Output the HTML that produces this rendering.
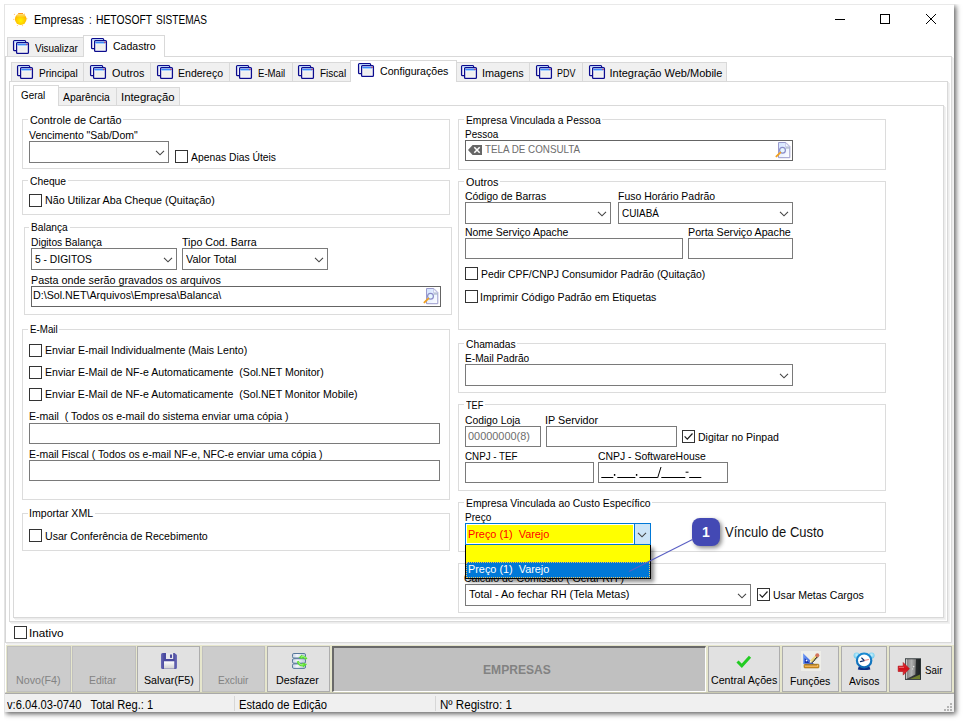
<!DOCTYPE html>
<html lang="pt-BR"><head><meta charset="utf-8"><title>Empresas : HETOSOFT SISTEMAS</title><style>
html,body{margin:0;padding:0;background:#fff}
#root{position:relative;width:963px;height:721px;overflow:hidden;background:#fff;font-family:"Liberation Sans",sans-serif}
#root>*{position:absolute;box-sizing:border-box}
#win{left:4px;top:4px;width:950px;height:708px;background:#fff;border:1px solid #e4e4e4;border-top-color:#e9e9e9;border-right:none;border-bottom:none;box-shadow:2px 2px 5px 0 rgba(0,0,0,.62);clip-path:inset(0 -14px -14px 0)}
.t{white-space:pre;line-height:24px;height:24px;transform-origin:0 0;font-family:"Liberation Sans",sans-serif}
svg{overflow:visible}
</style></head><body><div id="root">
<div id="win"></div>
<svg style="left:12px;top:11px" width="17" height="17" viewBox="12 11 17 17"><defs><radialGradient id="sg" cx="50%" cy="64%" r="58%"><stop offset="0" stop-color="#fff600"/><stop offset=".5" stop-color="#ffd200"/><stop offset="1" stop-color="#ffb000"/></radialGradient><linearGradient id="sh" x1="0" y1="0" x2="0" y2="1"><stop offset="0" stop-color="#fff0a0" stop-opacity=".9"/><stop offset="1" stop-color="#fff0a0" stop-opacity="0"/></linearGradient></defs><g fill="#ff9a1e" opacity=".55"><circle cx="14.500" cy="14.400" r=".6"/><circle cx="13.800" cy="19.400" r=".6"/><circle cx="17.400" cy="25.500" r=".6"/><circle cx="22.500" cy="25.600" r=".6"/><circle cx="26.800" cy="18.700" r=".6"/><circle cx="24.400" cy="14.300" r=".7"/></g><circle cx="20.700" cy="19.100" r="5.800" fill="url(#sg)"/><path d="M16.400 15.200a5.800 5.800 0 0 1 8.600 0v2.400h-8.600z" fill="url(#sh)"/><path d="M18.200 13.500h4.800" stroke="#ff8c10" stroke-width=".9"/></svg>
<svg style="left:830px;top:9px" width="112" height="20" viewBox="0 0 112 20" fill="none" stroke="#000" stroke-width="1"><path d="M5 10.5h10"/><rect x="50.5" y="5.5" width="9" height="9"/><path d="M96 5l10 10M106 5l-10 10"/></svg>
<div style="left:5px;top:56px;width:947px;height:587px;border:1px solid #d9d9d9;border-left-color:#d6d6d6;background:#fff;box-shadow:1px 1px 0 #ececec,2px 2px 0 #f2f2f2"></div>
<div style="left:7px;top:37px;width:77px;height:19px;border:1px solid #d9d9d9;border-bottom:none;background:#f0f0f0"></div>
<svg style="left:13px;top:40px" width="16" height="14" viewBox="0 0 16 14"><rect x=".6" y=".6" width="12" height="10" rx=".9" fill="#fff" stroke="#0c0c8e" stroke-width="1.3"/><rect x="1.3" y="1.3" width="10.5" height="1.3" fill="#b4d8ff"/><rect x="3.6" y="2.6" width="11.8" height="10.8" rx=".9" fill="#fff" stroke="#0c0c8e" stroke-width="1.3"/><rect x="5.2" y="6.2" width="8.6" height="5.6" fill="#efefef"/><rect x="4.3" y="3.7" width="10.4" height="1.3" fill="#2f7df6"/><rect x="4.3" y="4.9" width="10.4" height="1" fill="#9ccbff"/><rect x="13.3" y="3.8" width="1.3" height="1.3" fill="#e0344a"/></svg>
<div style="left:83px;top:35px;width:82px;height:22px;border:1px solid #d9d9d9;border-bottom:none;background:#fff"></div>
<svg style="left:91px;top:38px" width="16" height="14" viewBox="0 0 16 14"><rect x=".6" y=".6" width="12" height="10" rx=".9" fill="#fff" stroke="#0c0c8e" stroke-width="1.3"/><rect x="1.3" y="1.3" width="10.5" height="1.3" fill="#b4d8ff"/><rect x="3.6" y="2.6" width="11.8" height="10.8" rx=".9" fill="#fff" stroke="#0c0c8e" stroke-width="1.3"/><rect x="5.2" y="6.2" width="8.6" height="5.6" fill="#efefef"/><rect x="4.3" y="3.7" width="10.4" height="1.3" fill="#2f7df6"/><rect x="4.3" y="4.9" width="10.4" height="1" fill="#9ccbff"/><rect x="13.3" y="3.8" width="1.3" height="1.3" fill="#e0344a"/></svg>
<div style="left:9px;top:81px;width:939px;height:541px;border:1px solid #d9d9d9;background:#fff;box-shadow:1px 1px 0 #ececec,2px 2px 0 #f2f2f2"></div>
<div style="left:11px;top:62px;width:73px;height:19px;border:1px solid #d9d9d9;border-bottom:none;background:#f0f0f0"></div>
<svg style="left:17px;top:65px" width="16" height="14" viewBox="0 0 16 14"><rect x=".6" y=".6" width="12" height="10" rx=".9" fill="#fff" stroke="#0c0c8e" stroke-width="1.3"/><rect x="1.3" y="1.3" width="10.5" height="1.3" fill="#b4d8ff"/><rect x="3.6" y="2.6" width="11.8" height="10.8" rx=".9" fill="#fff" stroke="#0c0c8e" stroke-width="1.3"/><rect x="5.2" y="6.2" width="8.6" height="5.6" fill="#efefef"/><rect x="4.3" y="3.7" width="10.4" height="1.3" fill="#2f7df6"/><rect x="4.3" y="4.9" width="10.4" height="1" fill="#9ccbff"/><rect x="13.3" y="3.8" width="1.3" height="1.3" fill="#e0344a"/></svg>
<div style="left:83px;top:62px;width:68px;height:19px;border:1px solid #d9d9d9;border-bottom:none;background:#f0f0f0"></div>
<svg style="left:90px;top:65px" width="16" height="14" viewBox="0 0 16 14"><rect x=".6" y=".6" width="12" height="10" rx=".9" fill="#fff" stroke="#0c0c8e" stroke-width="1.3"/><rect x="1.3" y="1.3" width="10.5" height="1.3" fill="#b4d8ff"/><rect x="3.6" y="2.6" width="11.8" height="10.8" rx=".9" fill="#fff" stroke="#0c0c8e" stroke-width="1.3"/><rect x="5.2" y="6.2" width="8.6" height="5.6" fill="#efefef"/><rect x="4.3" y="3.7" width="10.4" height="1.3" fill="#2f7df6"/><rect x="4.3" y="4.9" width="10.4" height="1" fill="#9ccbff"/><rect x="13.3" y="3.8" width="1.3" height="1.3" fill="#e0344a"/></svg>
<div style="left:150px;top:62px;width:80px;height:19px;border:1px solid #d9d9d9;border-bottom:none;background:#f0f0f0"></div>
<svg style="left:157px;top:65px" width="16" height="14" viewBox="0 0 16 14"><rect x=".6" y=".6" width="12" height="10" rx=".9" fill="#fff" stroke="#0c0c8e" stroke-width="1.3"/><rect x="1.3" y="1.3" width="10.5" height="1.3" fill="#b4d8ff"/><rect x="3.6" y="2.6" width="11.8" height="10.8" rx=".9" fill="#fff" stroke="#0c0c8e" stroke-width="1.3"/><rect x="5.2" y="6.2" width="8.6" height="5.6" fill="#efefef"/><rect x="4.3" y="3.7" width="10.4" height="1.3" fill="#2f7df6"/><rect x="4.3" y="4.9" width="10.4" height="1" fill="#9ccbff"/><rect x="13.3" y="3.8" width="1.3" height="1.3" fill="#e0344a"/></svg>
<div style="left:229px;top:62px;width:64px;height:19px;border:1px solid #d9d9d9;border-bottom:none;background:#f0f0f0"></div>
<svg style="left:236px;top:65px" width="16" height="14" viewBox="0 0 16 14"><rect x=".6" y=".6" width="12" height="10" rx=".9" fill="#fff" stroke="#0c0c8e" stroke-width="1.3"/><rect x="1.3" y="1.3" width="10.5" height="1.3" fill="#b4d8ff"/><rect x="3.6" y="2.6" width="11.8" height="10.8" rx=".9" fill="#fff" stroke="#0c0c8e" stroke-width="1.3"/><rect x="5.2" y="6.2" width="8.6" height="5.6" fill="#efefef"/><rect x="4.3" y="3.7" width="10.4" height="1.3" fill="#2f7df6"/><rect x="4.3" y="4.9" width="10.4" height="1" fill="#9ccbff"/><rect x="13.3" y="3.8" width="1.3" height="1.3" fill="#e0344a"/></svg>
<div style="left:292px;top:62px;width:59px;height:19px;border:1px solid #d9d9d9;border-bottom:none;background:#f0f0f0"></div>
<svg style="left:298px;top:65px" width="16" height="14" viewBox="0 0 16 14"><rect x=".6" y=".6" width="12" height="10" rx=".9" fill="#fff" stroke="#0c0c8e" stroke-width="1.3"/><rect x="1.3" y="1.3" width="10.5" height="1.3" fill="#b4d8ff"/><rect x="3.6" y="2.6" width="11.8" height="10.8" rx=".9" fill="#fff" stroke="#0c0c8e" stroke-width="1.3"/><rect x="5.2" y="6.2" width="8.6" height="5.6" fill="#efefef"/><rect x="4.3" y="3.7" width="10.4" height="1.3" fill="#2f7df6"/><rect x="4.3" y="4.9" width="10.4" height="1" fill="#9ccbff"/><rect x="13.3" y="3.8" width="1.3" height="1.3" fill="#e0344a"/></svg>
<div style="left:456px;top:62px;width:74px;height:19px;border:1px solid #d9d9d9;border-bottom:none;background:#f0f0f0"></div>
<svg style="left:461px;top:65px" width="16" height="14" viewBox="0 0 16 14"><rect x=".6" y=".6" width="12" height="10" rx=".9" fill="#fff" stroke="#0c0c8e" stroke-width="1.3"/><rect x="1.3" y="1.3" width="10.5" height="1.3" fill="#b4d8ff"/><rect x="3.6" y="2.6" width="11.8" height="10.8" rx=".9" fill="#fff" stroke="#0c0c8e" stroke-width="1.3"/><rect x="5.2" y="6.2" width="8.6" height="5.6" fill="#efefef"/><rect x="4.3" y="3.7" width="10.4" height="1.3" fill="#2f7df6"/><rect x="4.3" y="4.9" width="10.4" height="1" fill="#9ccbff"/><rect x="13.3" y="3.8" width="1.3" height="1.3" fill="#e0344a"/></svg>
<div style="left:529px;top:62px;width:54px;height:19px;border:1px solid #d9d9d9;border-bottom:none;background:#f0f0f0"></div>
<svg style="left:536px;top:65px" width="16" height="14" viewBox="0 0 16 14"><rect x=".6" y=".6" width="12" height="10" rx=".9" fill="#fff" stroke="#0c0c8e" stroke-width="1.3"/><rect x="1.3" y="1.3" width="10.5" height="1.3" fill="#b4d8ff"/><rect x="3.6" y="2.6" width="11.8" height="10.8" rx=".9" fill="#fff" stroke="#0c0c8e" stroke-width="1.3"/><rect x="5.2" y="6.2" width="8.6" height="5.6" fill="#efefef"/><rect x="4.3" y="3.7" width="10.4" height="1.3" fill="#2f7df6"/><rect x="4.3" y="4.9" width="10.4" height="1" fill="#9ccbff"/><rect x="13.3" y="3.8" width="1.3" height="1.3" fill="#e0344a"/></svg>
<div style="left:582px;top:62px;width:145px;height:19px;border:1px solid #d9d9d9;border-bottom:none;background:#f0f0f0"></div>
<svg style="left:589px;top:65px" width="16" height="14" viewBox="0 0 16 14"><rect x=".6" y=".6" width="12" height="10" rx=".9" fill="#fff" stroke="#0c0c8e" stroke-width="1.3"/><rect x="1.3" y="1.3" width="10.5" height="1.3" fill="#b4d8ff"/><rect x="3.6" y="2.6" width="11.8" height="10.8" rx=".9" fill="#fff" stroke="#0c0c8e" stroke-width="1.3"/><rect x="5.2" y="6.2" width="8.6" height="5.6" fill="#efefef"/><rect x="4.3" y="3.7" width="10.4" height="1.3" fill="#2f7df6"/><rect x="4.3" y="4.9" width="10.4" height="1" fill="#9ccbff"/><rect x="13.3" y="3.8" width="1.3" height="1.3" fill="#e0344a"/></svg>
<div style="left:350px;top:60px;width:107px;height:22px;border:1px solid #d9d9d9;border-bottom:none;background:#fff"></div>
<svg style="left:358px;top:63px" width="16" height="14" viewBox="0 0 16 14"><rect x=".6" y=".6" width="12" height="10" rx=".9" fill="#fff" stroke="#0c0c8e" stroke-width="1.3"/><rect x="1.3" y="1.3" width="10.5" height="1.3" fill="#b4d8ff"/><rect x="3.6" y="2.6" width="11.8" height="10.8" rx=".9" fill="#fff" stroke="#0c0c8e" stroke-width="1.3"/><rect x="5.2" y="6.2" width="8.6" height="5.6" fill="#efefef"/><rect x="4.3" y="3.7" width="10.4" height="1.3" fill="#2f7df6"/><rect x="4.3" y="4.9" width="10.4" height="1" fill="#9ccbff"/><rect x="13.3" y="3.8" width="1.3" height="1.3" fill="#e0344a"/></svg>
<div style="left:13px;top:105px;width:931px;height:513px;border:1px solid #d9d9d9;background:#fff;box-shadow:1px 1px 0 #ececec,2px 2px 0 #f2f2f2"></div>
<div style="left:58px;top:87px;width:59px;height:18px;border:1px solid #d9d9d9;border-bottom:none;background:#f0f0f0"></div>
<div style="left:116px;top:87px;width:64px;height:18px;border:1px solid #d9d9d9;border-bottom:none;background:#f0f0f0"></div>
<div style="left:13px;top:85px;width:46px;height:21px;border:1px solid #d9d9d9;border-bottom:none;background:#fff"></div>
<div style="left:22px;top:119px;width:428px;height:50px;border:1px solid #dcdcdc"></div>
<div style="left:27.5px;top:116px;width:95.5px;height:8px;background:#fff"></div>
<div style="left:22px;top:180px;width:428px;height:35px;border:1px solid #dcdcdc"></div>
<div style="left:27.5px;top:177px;width:40.5px;height:8px;background:#fff"></div>
<div style="left:24px;top:227px;width:428px;height:88px;border:1px solid #dcdcdc"></div>
<div style="left:29px;top:224px;width:41px;height:8px;background:#fff"></div>
<div style="left:22px;top:329px;width:428px;height:171px;border:1px solid #dcdcdc"></div>
<div style="left:27.5px;top:326px;width:31.5px;height:8px;background:#fff"></div>
<div style="left:22px;top:513px;width:428px;height:38px;border:1px solid #dcdcdc"></div>
<div style="left:27.5px;top:510px;width:67.5px;height:8px;background:#fff"></div>
<div style="left:458px;top:119px;width:428px;height:51px;border:1px solid #dcdcdc"></div>
<div style="left:463.5px;top:116px;width:138.5px;height:8px;background:#fff"></div>
<div style="left:458px;top:181px;width:428px;height:149px;border:1px solid #dcdcdc"></div>
<div style="left:463.5px;top:178px;width:36.5px;height:8px;background:#fff"></div>
<div style="left:458px;top:343px;width:428px;height:50px;border:1px solid #dcdcdc"></div>
<div style="left:463.5px;top:340px;width:53.5px;height:8px;background:#fff"></div>
<div style="left:458px;top:404px;width:428px;height:87px;border:1px solid #dcdcdc"></div>
<div style="left:463.5px;top:401px;width:21.5px;height:8px;background:#fff"></div>
<div style="left:458px;top:502px;width:428px;height:50px;border:1px solid #dcdcdc"></div>
<div style="left:463.5px;top:499px;width:188.5px;height:8px;background:#fff"></div>
<div style="left:458px;top:563px;width:428px;height:50px;border:1px solid #dcdcdc"></div>
<div style="left:29px;top:141px;width:140px;height:22px;border:1px solid #7a7a7a;background:#fff"></div>
<svg style="left:155px;top:150px" width="10" height="6" viewBox="0 0 10 6"><path d="M1 .8l4 4 4-4" fill="none" stroke="#444" stroke-width="1.1"/></svg>
<div style="left:175px;top:150px;width:13px;height:13px;border:1px solid #333;background:#fff"></div>
<div style="left:29px;top:194px;width:13px;height:13px;border:1px solid #333;background:#fff"></div>
<div style="left:31px;top:248px;width:146px;height:22px;border:1px solid #7a7a7a;background:#fff"></div>
<svg style="left:163px;top:257px" width="10" height="6" viewBox="0 0 10 6"><path d="M1 .8l4 4 4-4" fill="none" stroke="#444" stroke-width="1.1"/></svg>
<div style="left:182px;top:248px;width:146px;height:22px;border:1px solid #7a7a7a;background:#fff"></div>
<svg style="left:314px;top:257px" width="10" height="6" viewBox="0 0 10 6"><path d="M1 .8l4 4 4-4" fill="none" stroke="#444" stroke-width="1.1"/></svg>
<div style="left:31px;top:286px;width:410px;height:21px;border:1px solid #646464;background:#fff"></div>
<svg style="left:423px;top:288px" width="16" height="17" viewBox="0 0 16 17"><defs><linearGradient id="pg1" x1="0" y1="0" x2="1" y2="1"><stop offset="0" stop-color="#cfe2ff"/><stop offset=".6" stop-color="#eef4ff"/><stop offset="1" stop-color="#fff"/></linearGradient></defs><path d="M3.5 .5h7.3l4 4v11.2H3.5z" fill="url(#pg1)" stroke="#9a9acd"/><path d="M10.5 .8v4h4z" fill="#f4f8ff" stroke="#b5b5dd" stroke-width=".6"/><path d="M10.7 4.8h3.8v2h-3.8z" fill="#a9b6c6" opacity=".7"/><circle cx="7.5" cy="8.3" r="2.9" fill="#e6f7ff" stroke="#8a8ac8" stroke-width="1.2"/><path d="M5.3 10.6L1.4 14.4" stroke="#f0a020" stroke-width="1.9" stroke-linecap="round"/></svg>
<div style="left:29px;top:344px;width:13px;height:13px;border:1px solid #333;background:#fff"></div>
<div style="left:29px;top:366px;width:13px;height:13px;border:1px solid #333;background:#fff"></div>
<div style="left:29px;top:388px;width:13px;height:13px;border:1px solid #333;background:#fff"></div>
<div style="left:29px;top:423px;width:411px;height:21px;border:1px solid #7a7a7a;background:#fff"></div>
<div style="left:29px;top:460px;width:411px;height:21px;border:1px solid #7a7a7a;background:#fff"></div>
<div style="left:29px;top:529px;width:13px;height:13px;border:1px solid #333;background:#fff"></div>
<div style="left:14px;top:626px;width:13px;height:13px;border:1px solid #333;background:#fff"></div>
<div style="left:465px;top:140px;width:328px;height:21px;border:1px solid #646464;background:#fff"></div>
<svg style="left:775px;top:142px" width="16" height="17" viewBox="0 0 16 17"><defs><linearGradient id="pg2" x1="0" y1="0" x2="1" y2="1"><stop offset="0" stop-color="#cfe2ff"/><stop offset=".6" stop-color="#eef4ff"/><stop offset="1" stop-color="#fff"/></linearGradient></defs><path d="M3.5 .5h7.3l4 4v11.2H3.5z" fill="url(#pg2)" stroke="#9a9acd"/><path d="M10.5 .8v4h4z" fill="#f4f8ff" stroke="#b5b5dd" stroke-width=".6"/><path d="M10.7 4.8h3.8v2h-3.8z" fill="#a9b6c6" opacity=".7"/><circle cx="7.5" cy="8.3" r="2.9" fill="#e6f7ff" stroke="#8a8ac8" stroke-width="1.2"/><path d="M5.3 10.6L1.4 14.4" stroke="#f0a020" stroke-width="1.9" stroke-linecap="round"/></svg>
<svg style="left:468px;top:145px" width="14" height="10" viewBox="0 0 14 10"><path d="M0 5L4.6 0H14v10H4.6z" fill="#666"/><path d="M6.3 2.2l5.4 5.6M11.7 2.2L6.3 7.8" stroke="#fff" stroke-width="1.5"/></svg>
<div style="left:465px;top:202px;width:146px;height:22px;border:1px solid #7a7a7a;background:#fff"></div>
<svg style="left:597px;top:211px" width="10" height="6" viewBox="0 0 10 6"><path d="M1 .8l4 4 4-4" fill="none" stroke="#444" stroke-width="1.1"/></svg>
<div style="left:618px;top:202px;width:175px;height:22px;border:1px solid #7a7a7a;background:#fff"></div>
<svg style="left:779px;top:211px" width="10" height="6" viewBox="0 0 10 6"><path d="M1 .8l4 4 4-4" fill="none" stroke="#444" stroke-width="1.1"/></svg>
<div style="left:465px;top:238px;width:218px;height:21px;border:1px solid #7a7a7a;background:#fff"></div>
<div style="left:688px;top:238px;width:105px;height:21px;border:1px solid #7a7a7a;background:#fff"></div>
<div style="left:465px;top:267px;width:13px;height:13px;border:1px solid #333;background:#fff"></div>
<div style="left:465px;top:290px;width:13px;height:13px;border:1px solid #333;background:#fff"></div>
<div style="left:465px;top:364px;width:328px;height:22px;border:1px solid #7a7a7a;background:#fff"></div>
<svg style="left:779px;top:373px" width="10" height="6" viewBox="0 0 10 6"><path d="M1 .8l4 4 4-4" fill="none" stroke="#444" stroke-width="1.1"/></svg>
<div style="left:465px;top:426px;width:76px;height:21px;border:1px solid #7a7a7a;background:#fff"></div>
<div style="left:546px;top:426px;width:131px;height:21px;border:1px solid #7a7a7a;background:#fff"></div>
<div style="left:682px;top:430px;width:13px;height:13px;border:1px solid #333;background:#fff"></div>
<svg style="left:682px;top:430px" width="13" height="13" viewBox="0 0 13 13"><path d="M2.6 6.4l2.7 2.8 5.2-5.7" fill="none" stroke="#1a1a1a" stroke-width="1.2"/></svg>
<div style="left:465px;top:462px;width:129px;height:21px;border:1px solid #7a7a7a;background:#fff"></div>
<div style="left:598px;top:462px;width:130px;height:21px;border:1px solid #7a7a7a;background:#fff"></div>
<div style="left:465px;top:584px;width:286px;height:22px;border:1px solid #7a7a7a;background:#fff"></div>
<svg style="left:737px;top:593px" width="10" height="6" viewBox="0 0 10 6"><path d="M1 .8l4 4 4-4" fill="none" stroke="#444" stroke-width="1.1"/></svg>
<div style="left:757px;top:588px;width:13px;height:13px;border:1px solid #333;background:#fff"></div>
<svg style="left:757px;top:588px" width="13" height="13" viewBox="0 0 13 13"><path d="M2.6 6.4l2.7 2.8 5.2-5.7" fill="none" stroke="#1a1a1a" stroke-width="1.2"/></svg>
<svg style="left:598px;top:463px" width="130" height="20" viewBox="598 463 130 20" stroke="#000" fill="#000" stroke-width="1"><path d="M601.3 477.5h12M617.3 477.5h18.100M639.400 477.500h18.100M661.300 477.500h24M689.200 477.500h12.100" /><rect x="613.900" y="474" width="1.400" height="1.800" stroke="none"/><rect x="635.900" y="474" width="1.400" height="1.800" stroke="none"/><path d="M657.600 478L661 467" /><path d="M685.600 472.200h2.900" /></svg>
<span class="t" style="left:464px;top:566px;font-size:11px;transform:scaleX(.955)">Cálculo de Comissão ( Gerar RH )</span>
<span class="t" style="left:34.08px;top:8px;font-size:12px;color:#000;font-weight:400;transform:scaleX(0.9208);">Empresas</span>
<span class="t" style="left:89.10px;top:8px;font-size:12px;color:#000;font-weight:400;transform:scaleX(0.8000);">:</span>
<span class="t" style="left:95.74px;top:8px;font-size:12px;color:#000;font-weight:400;transform:scaleX(0.8609);">HETOSOFT</span>
<span class="t" style="left:155.50px;top:8px;font-size:12px;color:#000;font-weight:400;transform:scaleX(0.8410);">SISTEMAS</span>
<span class="t" style="left:34.50px;top:36px;font-size:11px;color:#000;font-weight:400;transform:scaleX(0.9000);">Visualizar</span>
<span class="t" style="left:113.00px;top:34px;font-size:11px;color:#000;font-weight:400;transform:scaleX(0.9556);">Cadastro</span>
<span class="t" style="left:38.50px;top:61px;font-size:11px;color:#000;font-weight:400;transform:scaleX(0.9167);">Principal</span>
<span class="t" style="left:111.60px;top:61px;font-size:11px;color:#000;font-weight:400;transform:scaleX(0.9818);">Outros</span>
<span class="t" style="left:178.00px;top:61px;font-size:11px;color:#000;font-weight:400;transform:scaleX(0.9574);">Endereço</span>
<span class="t" style="left:258.00px;top:61px;font-size:11px;color:#000;font-weight:400;transform:scaleX(0.8710);">E-Mail</span>
<span class="t" style="left:319.50px;top:61px;font-size:11px;color:#000;font-weight:400;transform:scaleX(0.9107);">Fiscal</span>
<span class="t" style="left:380.00px;top:59px;font-size:11px;color:#000;font-weight:400;transform:scaleX(0.9634);">Configurações</span>
<span class="t" style="left:481.51px;top:61px;font-size:11px;color:#000;font-weight:400;transform:scaleX(0.9878);">Imagens</span>
<span class="t" style="left:557.30px;top:61px;font-size:11px;color:#000;font-weight:400;transform:scaleX(0.8130);">PDV</span>
<span class="t" style="left:609.50px;top:61px;font-size:11px;color:#000;font-weight:400;transform:scaleX(1.0000);">Integração Web/Mobile</span>
<span class="t" style="left:20.80px;top:83px;font-size:11px;color:#000;font-weight:400;transform:scaleX(0.8963);">Geral</span>
<span class="t" style="left:62.80px;top:85px;font-size:11px;color:#000;font-weight:400;transform:scaleX(0.9440);">Aparência</span>
<span class="t" style="left:121.37px;top:85px;font-size:11px;color:#000;font-weight:400;transform:scaleX(1.0314);">Integração</span>
<span class="t" style="left:29.50px;top:108px;font-size:11px;color:#000;font-weight:400;transform:scaleX(0.9839);">Controle de Cartão</span>
<span class="t" style="left:29.00px;top:123px;font-size:11px;color:#000;font-weight:400;transform:scaleX(0.9518);">Vencimento "Sab/Dom"</span>
<span class="t" style="left:191.00px;top:145px;font-size:11px;color:#000;font-weight:400;transform:scaleX(0.9396);">Apenas Dias Úteis</span>
<span class="t" style="left:29.50px;top:169px;font-size:11px;color:#000;font-weight:400;transform:scaleX(0.9359);">Cheque</span>
<span class="t" style="left:44.50px;top:188px;font-size:11px;color:#000;font-weight:400;transform:scaleX(0.9714);">Não Utilizar Aba Cheque (Quitação)</span>
<span class="t" style="left:31.00px;top:215px;font-size:11px;color:#000;font-weight:400;transform:scaleX(0.9250);">Balança</span>
<span class="t" style="left:30.50px;top:230px;font-size:11px;color:#000;font-weight:400;transform:scaleX(0.9286);">Digitos Balança</span>
<span class="t" style="left:35.00px;top:247px;font-size:11px;color:#000;font-weight:400;transform:scaleX(0.9344);">5 - DIGITOS</span>
<span class="t" style="left:182.00px;top:230px;font-size:11px;color:#000;font-weight:400;transform:scaleX(0.9675);">Tipo Cod. Barra</span>
<span class="t" style="left:186.00px;top:247px;font-size:11px;color:#000;font-weight:400;transform:scaleX(0.9902);">Valor Total</span>
<span class="t" style="left:30.50px;top:268px;font-size:11px;color:#000;font-weight:400;transform:scaleX(0.9794);">Pasta onde serão gravados os arquivos</span>
<span class="t" style="left:32.50px;top:283px;font-size:11px;color:#000;font-weight:400;transform:scaleX(0.9716);">D:\Sol.NET\Arquivos\Empresa\Balanca\</span>
<span class="t" style="left:29.50px;top:317px;font-size:11px;color:#000;font-weight:400;transform:scaleX(0.8871);">E-Mail</span>
<span class="t" style="left:44.50px;top:338px;font-size:11px;color:#000;font-weight:400;transform:scaleX(0.9641);">Enviar E-mail Individualmente (Mais Lento)</span>
<span class="t" style="left:44.50px;top:360px;font-size:11px;color:#000;font-weight:400;transform:scaleX(0.9603);">Enviar E-Mail de NF-e Automaticamente  (Sol.NET Monitor)</span>
<span class="t" style="left:44.50px;top:382px;font-size:11px;color:#000;font-weight:400;transform:scaleX(0.9600);">Enviar E-Mail de NF-e Automaticamente  (Sol.NET Monitor Mobile)</span>
<span class="t" style="left:29.00px;top:404px;font-size:11px;color:#000;font-weight:400;transform:scaleX(0.9593);">E-mail  ( Todos os e-mail do sistema enviar uma cópia )</span>
<span class="t" style="left:29.00px;top:442px;font-size:11px;color:#000;font-weight:400;transform:scaleX(0.9498);">E-mail Fiscal ( Todos os e-mail NF-e, NFC-e enviar uma cópia )</span>
<span class="t" style="left:28.54px;top:501px;font-size:11px;color:#000;font-weight:400;transform:scaleX(0.9621);">Importar XML</span>
<span class="t" style="left:44.50px;top:524px;font-size:11px;color:#000;font-weight:400;transform:scaleX(0.9645);">Usar Conferência de Recebimento</span>
<span class="t" style="left:28.94px;top:621px;font-size:11px;color:#000;font-weight:400;transform:scaleX(1.0645);">Inativo</span>
<span class="t" style="left:465.50px;top:108px;font-size:11px;color:#000;font-weight:400;transform:scaleX(0.9340);">Empresa Vinculada a Pessoa</span>
<span class="t" style="left:464.50px;top:122px;font-size:11px;color:#000;font-weight:400;transform:scaleX(0.9054);">Pessoa</span>
<span class="t" style="left:484.50px;top:137px;font-size:11px;color:#6d6d6d;font-weight:400;transform:scaleX(0.8925);">TELA DE CONSULTA</span>
<span class="t" style="left:465.50px;top:170px;font-size:11px;color:#000;font-weight:400;transform:scaleX(0.9848);">Outros</span>
<span class="t" style="left:464.50px;top:184px;font-size:11px;color:#000;font-weight:400;transform:scaleX(0.9477);">Código de Barras</span>
<span class="t" style="left:618.00px;top:184px;font-size:11px;color:#000;font-weight:400;transform:scaleX(0.9510);">Fuso Horário Padrão</span>
<span class="t" style="left:622.00px;top:201px;font-size:11px;color:#000;font-weight:400;transform:scaleX(0.9024);">CUIABÁ</span>
<span class="t" style="left:464.50px;top:220px;font-size:11px;color:#000;font-weight:400;transform:scaleX(0.9495);">Nome Serviço Apache</span>
<span class="t" style="left:687.50px;top:220px;font-size:11px;color:#000;font-weight:400;transform:scaleX(0.9717);">Porta Serviço Apache</span>
<span class="t" style="left:480.50px;top:262px;font-size:11px;color:#000;font-weight:400;transform:scaleX(0.9433);">Pedir CPF/CNPJ Consumidor Padrão (Quitação)</span>
<span class="t" style="left:479.54px;top:285px;font-size:11px;color:#000;font-weight:400;transform:scaleX(0.9617);">Imprimir Código Padrão em Etiquetas</span>
<span class="t" style="left:465.50px;top:332px;font-size:11px;color:#000;font-weight:400;transform:scaleX(0.9340);">Chamadas</span>
<span class="t" style="left:464.50px;top:346px;font-size:11px;color:#000;font-weight:400;transform:scaleX(0.9214);">E-Mail Padrão</span>
<span class="t" style="left:465.50px;top:393px;font-size:11px;color:#000;font-weight:400;transform:scaleX(0.8333);">TEF</span>
<span class="t" style="left:464.50px;top:408px;font-size:11px;color:#000;font-weight:400;transform:scaleX(0.9407);">Codigo Loja</span>
<span class="t" style="left:545.02px;top:408px;font-size:11px;color:#000;font-weight:400;transform:scaleX(0.9811);">IP Servidor</span>
<span class="t" style="left:467.50px;top:424px;font-size:11px;color:#6d6d6d;font-weight:400;transform:scaleX(0.9919);">00000000(8)</span>
<span class="t" style="left:697.50px;top:425px;font-size:11px;color:#000;font-weight:400;transform:scaleX(0.9583);">Digitar no Pinpad</span>
<span class="t" style="left:464.50px;top:444px;font-size:11px;color:#000;font-weight:400;transform:scaleX(0.8898);">CNPJ - TEF</span>
<span class="t" style="left:598.00px;top:444px;font-size:11px;color:#000;font-weight:400;transform:scaleX(0.9474);">CNPJ - SoftwareHouse</span>
<span class="t" style="left:465.50px;top:491px;font-size:11px;color:#000;font-weight:400;transform:scaleX(0.9413);">Empresa Vinculada ao Custo Específico</span>
<span class="t" style="left:464.50px;top:505px;font-size:11px;color:#000;font-weight:400;transform:scaleX(0.9138);">Preço</span>
<span class="t" style="left:468.50px;top:582px;font-size:11px;color:#000;font-weight:400;transform:scaleX(0.9907);">Total - Ao fechar RH (Tela Metas)</span>
<span class="t" style="left:772.50px;top:583px;font-size:11px;color:#000;font-weight:400;transform:scaleX(0.9579);">Usar Metas Cargos</span>
<span class="t" style="left:724.80px;top:520px;font-size:14px;color:#111;font-weight:400;transform:scaleX(0.9264);">Vínculo de Custo</span>
<div style="left:465px;top:523px;width:186px;height:22px;border:1px solid #0078d7;background:#fff"></div>
<div style="left:467px;top:525px;width:166px;height:18px;background:#ffff00"></div>
<div style="left:634px;top:523px;width:17px;height:22px;border:1px solid #0078d7;background:#cce4f7"></div>
<svg style="left:637px;top:532px" width="10" height="6" viewBox="0 0 10 6"><path d="M1 .8l4 4 4-4" fill="none" stroke="#444" stroke-width="1.1"/></svg>
<span class="t" style="left:468.00px;top:522px;font-size:11px;color:#ff0000;font-weight:400;transform:scaleX(0.9878);">Preço (1)  Varejo</span>
<div style="left:465px;top:545px;width:186px;height:34px;border:1px solid #000;border-top:none;background:#ffff00;box-shadow:3px 3px 4px rgba(0,0,0,.45)"></div>
<div style="left:466px;top:562px;width:184px;height:16px;background:#0078d7;outline:1px dotted #e8c060;outline-offset:-1px"></div>
<span class="t" style="left:467.50px;top:557px;font-size:11px;color:#fff;font-weight:400;transform:scaleX(0.9878);">Preço (1)  Varejo</span>
<svg style="left:620px;top:530px" width="80" height="50" viewBox="0 0 80 50"><path d="M72.5 9.5L9 41.5" stroke="#5a5fc4" stroke-width="1.1"/></svg>
<div style="left:692px;top:518px;width:28px;height:28px;background:#4349b4;border-radius:8px;box-shadow:2px 2px 4px rgba(0,0,0,.45)"></div>
<span class="t" style="left:692px;top:520px;width:28px;text-align:center;font-size:14px;font-weight:700;color:#fff;transform:none">1</span>
<div style="left:6px;top:645px;width:948px;height:48px;background:#e6e6cc"></div>
<div style="left:7px;top:646px;width:64px;height:46px;border:1px solid #bfbfbf;background:#cccccc"></div>
<div style="left:72px;top:646px;width:64px;height:46px;border:1px solid #bfbfbf;background:#cccccc"></div>
<div style="left:137px;top:646px;width:63px;height:46px;border:1px solid #adadad;background:#e1e1e1"></div>
<div style="left:202px;top:646px;width:63px;height:46px;border:1px solid #bfbfbf;background:#cccccc"></div>
<div style="left:267px;top:646px;width:63px;height:46px;border:1px solid #adadad;background:#e1e1e1"></div>
<div style="left:332px;top:646px;width:374px;height:46px;background:#c0c0c0;border-top:2px solid #696969;border-left:2px solid #696969;border-bottom:1px solid #fff;border-right:1px solid #fff"></div>
<div style="left:708px;top:646px;width:72px;height:46px;border:1px solid #adadad;background:#e1e1e1"></div>
<div style="left:782px;top:646px;width:57px;height:46px;border:1px solid #adadad;background:#e1e1e1"></div>
<div style="left:841px;top:646px;width:46px;height:46px;border:1px solid #adadad;background:#e1e1e1"></div>
<div style="left:889px;top:646px;width:63px;height:46px;border:1px solid #adadad;background:#e1e1e1"></div>
<span class="t" style="left:483px;top:658px;font-size:13px;font-weight:700;color:#828282;transform:scaleX(.93)">EMPRESAS</span>
<svg style="left:161px;top:653px" width="16" height="16" viewBox="0 0 16 16"><defs><linearGradient id="fl" x1="0" x2="1"><stop offset="0" stop-color="#6a6ab6"/><stop offset=".2" stop-color="#4a4a9e"/><stop offset=".8" stop-color="#4a4a9e"/><stop offset="1" stop-color="#6f6fba"/></linearGradient><linearGradient id="fw" y1="0" y2="1" x1="0" x2="0"><stop offset="0" stop-color="#fff"/><stop offset="1" stop-color="#d0d0d0"/></linearGradient></defs><path d="M1.5 0h12l2.5 2v12.5a1.5 1.5 0 0 1-1.5 1.5h-13A1.5 1.5 0 0 1 0 14.500V1.500A1.500 1.500 0 0 1 1.500 0z" fill="url(#fl)"/><rect x="5" y="0" width="7.200" height="6" fill="#e8e8ec"/><rect x="9" y="1.500" width="2" height="3.400" fill="#4a4a9e"/><rect x="3" y="8.300" width="10.300" height="7.400" fill="url(#fw)"/></svg>
<svg style="left:292px;top:653px" width="16" height="16" viewBox="0 0 16 16"><defs><linearGradient id="dbg" x1="0" x2="1"><stop offset="0" stop-color="#c4d2e2"/><stop offset=".35" stop-color="#f4f7fb"/><stop offset="1" stop-color="#b9c8da"/></linearGradient></defs><g fill="url(#dbg)" stroke="#57789b"><rect x=".5" y=".5" width="13" height="4.500" rx="1.300"/><rect x=".5" y="5.700" width="13" height="4.500" rx="1.300"/><rect x=".5" y="10.900" width="13" height="4.500" rx="1.300"/></g><path d="M8.600 5c1.500-2 4.500-1.500 5.800 1.300" fill="none" stroke="#5be12f" stroke-width="2.300"/><path d="M6.500 4.800l3.500-3.200.8 4.300z" fill="#5be12f"/><path d="M5.800 8.300c.8 3.300 3.700 4.700 6.200 3.400" fill="none" stroke="#5be12f" stroke-width="2.300"/><path d="M15.200 11l-4.200 3.400-.9-4.600z" fill="#5be12f"/><path d="M9 4.200c1.500-1.200 3.500-.8 4.600.8M6.600 9.500c1 2 3 2.800 4.800 2.200" fill="none" stroke="#c8ffae" stroke-width=".7"/></svg>
<svg style="left:736px;top:655px" width="16" height="13" viewBox="0 0 16 13"><path d="M1.500 6.500l4.300 4.300L14 1.800" fill="none" stroke="#22cc22" stroke-width="3"/></svg>
<svg style="left:801px;top:651px" width="20" height="20" viewBox="801 651 20 20"><defs><linearGradient id="tr" x1="0" x2="1"><stop offset="0" stop-color="#6c98f4"/><stop offset="1" stop-color="#2a52d0"/></linearGradient><linearGradient id="ru" x1="0" y1="0" x2="0" y2="1"><stop offset="0" stop-color="#ffd98c"/><stop offset="1" stop-color="#f09a24"/></linearGradient></defs><rect x="801" y="651" width="20" height="20" fill="#eeeee9"/><path d="M803.100 653.200v10.900h10.800z" fill="url(#tr)"/><path d="M804.600 658v4.900h4.800z" fill="#1a37b0"/><circle cx="806.500" cy="660.600" r=".8" fill="#fff"/><rect x="804.200" y="664.300" width="14.600" height="3.500" rx=".5" fill="url(#ru)" stroke="#a06a00" stroke-width=".9"/><path d="M806 664.500v1.300M808 664.500v1.300M810 664.500v1.300M812 664.500v1.300M814 664.500v1.300M816 664.500v1.300" stroke="#6a4200" stroke-width=".8"/><path d="M809.700 662.900l.5-2.300 6-6 1.900 1.900-6 6z" fill="#eedb84"/><path d="M811.600 662.900l6.400-6.400" stroke="#111" stroke-width="1.2" stroke-dasharray="1.2 .5"/><path d="M809.700 662.900l.5-2.200 1.700 1.700z" fill="#f4f4f4"/><path d="M809.700 662.900l.2-.9.700.7z" fill="#333"/><circle cx="817.300" cy="655.200" r="2" fill="#d2735c"/></svg>
<svg style="left:854px;top:651px" width="20" height="20" viewBox="854 651 20 20"><defs><radialGradient id="bl" cx="50%" cy="40%" r="60%"><stop offset="0" stop-color="#c9f1fb"/><stop offset="1" stop-color="#63c6ee"/></radialGradient><linearGradient id="rg" x1="0" y1="0" x2="0" y2="1"><stop offset="0" stop-color="#1b8ad2"/><stop offset="1" stop-color="#0f6ab4"/></linearGradient></defs><circle cx="856.700" cy="655.600" r="3.100" fill="url(#bl)"/><circle cx="871.500" cy="655.600" r="3.100" fill="url(#bl)"/><path d="M858.800 666.300l-1 3.300q6.300 1 12.600 0l-1-3.300z" fill="#0b2f86"/><ellipse cx="864.100" cy="660.400" rx="7.200" ry="6.900" fill="#fff" stroke="url(#rg)" stroke-width="2.200"/><path d="M864.300 660.500l-2.600-2.500M864.300 660.600l-3.900 1" stroke="#12306e" stroke-width="1.100" stroke-linecap="round"/><path d="M864.500 660.400l4.400-.9" stroke="#f0706a" stroke-width=".9"/></svg>
<svg style="left:896px;top:656px" width="26" height="26" viewBox="896 656 26 26"><defs><linearGradient id="dl" x1="0" x2="1"><stop offset="0" stop-color="#7e7e7e"/><stop offset=".55" stop-color="#b2b2b2"/><stop offset="1" stop-color="#7a7a7a"/></linearGradient><linearGradient id="dr" x1="0" x2="1"><stop offset="0" stop-color="#4a4a4a"/><stop offset="1" stop-color="#1e2224"/></linearGradient><linearGradient id="ar" x1="0" y1="0" x2="0" y2="1"><stop offset="0" stop-color="#e0343a"/><stop offset=".5" stop-color="#d20f18"/><stop offset="1" stop-color="#e03c42"/></linearGradient></defs><rect x="905" y="658.300" width="16" height="21.600" fill="#2c3436"/><rect x="906" y="659.300" width="14" height="19.600" fill="url(#dr)"/><path d="M910 679l10-4.500v4.500z" fill="#6f7d2c"/><path d="M906.200 659.300h9.800l-.6 15.200-9.200 4.400z" fill="url(#dl)"/><path d="M906.300 659.300v19.500" stroke="#e8e8e8" stroke-width=".9"/><circle cx="913.600" cy="666.600" r=".8" fill="#e4e4e4"/><circle cx="912.600" cy="668.900" r=".7" fill="#d8d8d8"/><path d="M898.200 666.100h5v-3.600l6.200 6.300-6.200 6.300v-3.600h-5z" fill="url(#ar)" stroke="#b00c14" stroke-width=".6"/><path d="M899 667.300h5" stroke="#f58a8e" stroke-width=".8"/></svg>
<div style="left:5px;top:693px;width:949px;height:1px;background:#a9a9a9"></div>
<div style="left:5px;top:692px;width:949px;height:1px;background:rgba(120,120,100,.25)"></div>
<div style="left:5px;top:694px;width:949px;height:18px;background:#f0f0f0"></div>
<div style="left:234px;top:696px;width:1px;height:15px;background:#d7d7d7"></div>
<div style="left:435px;top:696px;width:1px;height:15px;background:#d7d7d7"></div>
<svg style="left:943px;top:702px" width="10" height="10" viewBox="943 702 10 10" fill="#b4b4b4"><rect x="950" y="703" width="2" height="2"/><rect x="947" y="706" width="2" height="2"/><rect x="950" y="706" width="2" height="2"/><rect x="944" y="709" width="2" height="2"/><rect x="947" y="709" width="2" height="2"/><rect x="950" y="709" width="2" height="2"/></svg>
<span class="t" style="left:15.50px;top:668px;font-size:11px;color:#838383;font-weight:400;transform:scaleX(0.9739);">Novo(F4)</span>
<span class="t" style="left:89.20px;top:668px;font-size:11px;color:#838383;font-weight:400;transform:scaleX(0.9448);">Editar</span>
<span class="t" style="left:143.50px;top:668px;font-size:11px;color:#000;font-weight:400;transform:scaleX(0.9706);">Salvar(F5)</span>
<span class="t" style="left:217.50px;top:668px;font-size:11px;color:#838383;font-weight:400;transform:scaleX(0.9242);">Excluir</span>
<span class="t" style="left:276.20px;top:668px;font-size:11px;color:#000;font-weight:400;transform:scaleX(0.9727);">Desfazer</span>
<span class="t" style="left:710.80px;top:668px;font-size:11px;color:#000;font-weight:400;transform:scaleX(0.9681);">Central Ações</span>
<span class="t" style="left:790.30px;top:669px;font-size:11px;color:#000;font-weight:400;transform:scaleX(0.9571);">Funções</span>
<span class="t" style="left:848.80px;top:669px;font-size:11px;color:#000;font-weight:400;transform:scaleX(0.9438);">Avisos</span>
<span class="t" style="left:925.40px;top:658px;font-size:11px;color:#000;font-weight:400;transform:scaleX(0.8900);">Sair</span>
<span class="t" style="left:7.00px;top:693px;font-size:12px;color:#000;font-weight:400;transform:scaleX(0.9299);">v:6.04.03-0740   Total Reg.: 1</span>
<span class="t" style="left:239.06px;top:693px;font-size:12px;color:#000;font-weight:400;transform:scaleX(0.9355);">Estado de Edição</span>
<span class="t" style="left:439.53px;top:693px;font-size:12px;color:#000;font-weight:400;transform:scaleX(0.9658);">Nº Registro: 1</span>
</div></body></html>
